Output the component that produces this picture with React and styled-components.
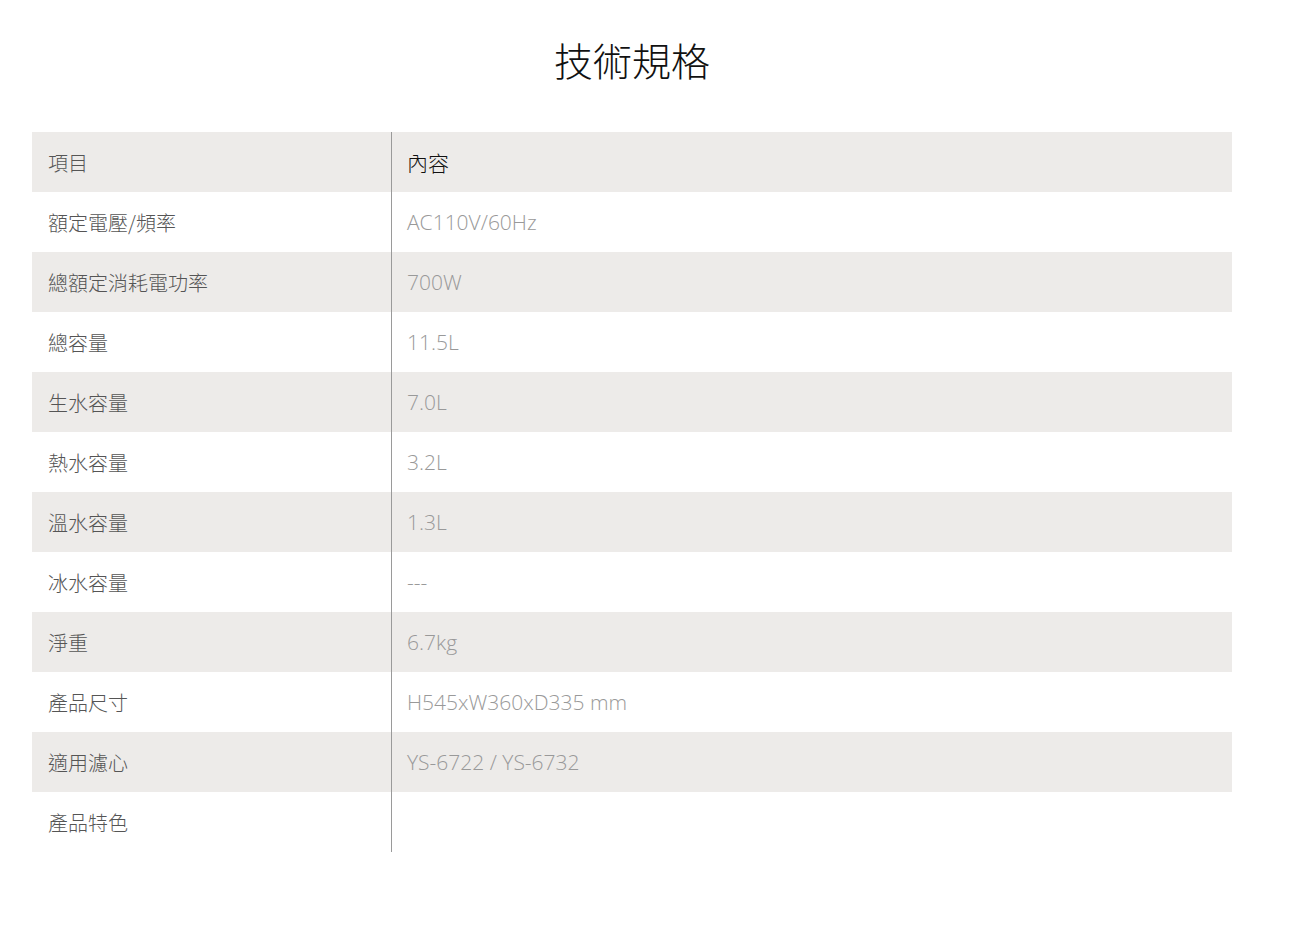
import styled, { createGlobalStyle } from "styled-components";

const GlobalStyle = createGlobalStyle`
  body {
    margin: 0;
    background: #ffffff;
    font-family: "Open Sans", "Noto Sans CJK TC", sans-serif;
  }
`;

const rows = [
  ["額定電壓/頻率", "AC110V/60Hz"],
  ["總額定消耗電功率", "700W"],
  ["總容量", "11.5L"],
  ["生水容量", "7.0L"],
  ["熱水容量", "3.2L"],
  ["溫水容量", "1.3L"],
  ["冰水容量", "---"],
  ["淨重", "6.7kg"],
  ["產品尺寸", "H545xW360xD335 mm"],
  ["適用濾心", "YS-6722 / YS-6732"],
  ["產品特色", ""],
];

export default function App() {
  return (
    <Page>
      <GlobalStyle />
      <Title>技術規格</Title>
      <Table>
        <Row $shade>
          <Label>項目</Label>
          <Value $head>內容</Value>
        </Row>
        {rows.map(([label, value], i) => (
          <Row key={label} $shade={i % 2 === 1}>
            <Label>{label}</Label>
            <Value>{value}</Value>
          </Row>
        ))}
      </Table>
    </Page>
  );
}

const Page = styled.div`
  width: 1200px;
  padding: 36px 32px 76px;
  display: flex;
  flex-direction: column;
`;

const Title = styled.h2`
  margin: 0 0 49px;
  text-align: center;
  font-family: "Noto Sans CJK TC", sans-serif;
  font-size: 39px;
  font-weight: 300;
  line-height: 47px;
  color: #111;
`;

const Table = styled.div`
  display: flex;
  flex-direction: column;
`;

const Row = styled.div`
  display: grid;
  grid-template-columns: 359px 1fr;
  height: 60px;
  background: ${(p) => (p.$shade ? "#edebe9" : "#ffffff")};
`;

const Label = styled.div`
  display: flex;
  align-items: center;
  padding-left: 16px;
  font-family: "Noto Sans CJK TC", sans-serif;
  font-size: 20px;
  font-weight: 300;
  color: #555;
`;

const Value = styled.div`
  display: flex;
  align-items: center;
  padding-left: 15px;
  border-left: 1px solid #9a9a9a;
  font-family: "Open Sans", "Noto Sans CJK TC", sans-serif;
  font-size: 21px;
  font-weight: 300;
  color: ${(p) => (p.$head ? "#111" : "#999")};
`;
